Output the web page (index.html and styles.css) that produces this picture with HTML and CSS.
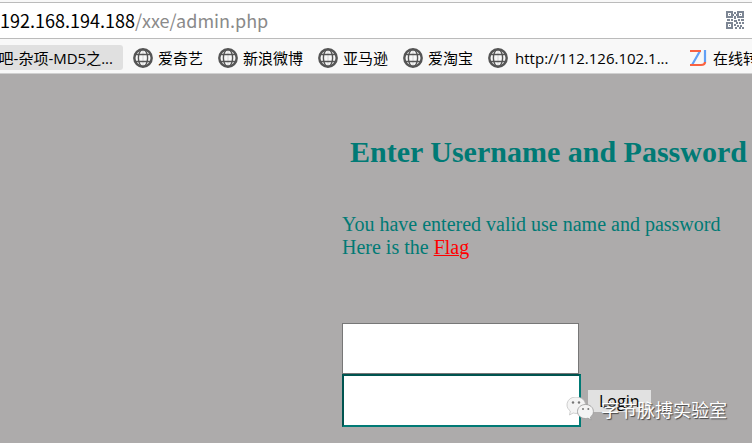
FILE: index.html
```html
<!DOCTYPE html>
<html lang="zh-CN">
<head>
<meta charset="utf-8">
<title>Login</title>
<link rel="stylesheet" href="styles.css">
</head>
<body>
<svg class="defs" aria-hidden="true">
  <symbol id="globe" viewBox="0 0 20 20">
    <g fill="none" stroke="#555">
      <circle cx="10" cy="10" r="8.7" stroke-width="2.4"/>
      <ellipse cx="10" cy="10" rx="4.6" ry="8.5" stroke-width="1.4"/>
      <path d="M2.8 6.500h14.4M2.8 13.500h14.4" stroke-width="1.3"/>
      <path d="M10 1.5v17" stroke-width=".5" opacity=".4"/>
    </g>
  </symbol>
</svg>
<header class="chrome">
  <div class="address">
    <div class="url"><span class="host">192.168.194.188</span>/xxe/admin.php</div>
    <button class="qr" type="button" aria-label="QR">
      <svg width="18" height="18" viewBox="0 0 18 18">
        <g fill="none" stroke="#7d8694" stroke-width="2">
          <path d="M1 1h5v5H1zM12 1h5v5h-5zM1 12h5v5H1z"/>
        </g>
        <path fill="#7d8694" d="M3 3h1v1H3zM14 3h1v1h-1zM3 14h1v1H3zM8 1h2v2H8zM8 5h2v3H8zM1 8h3v2H1zM5 8h2v2H5zM7 3h1v2H7zM10 3h1v2h-1zM8 9h3v2H8zM12 8h2v2h-2zM15 8h3v2h-3zM10 11h2v2h-2zM13 11h2v2h-2zM16 11h2v2h-2zM8 13h2v2H8zM11 14h2v2h-2zM14 14h2v2h-2zM9 16h2v2H9zM13 16h2v2h-2zM16 16h2v2h-2z"/>
      </svg>
    </button>
  </div>
  <nav class="bookmarks">
    <a class="mark current" href="#">吧-杂项-MD5之...</a>
    <a class="mark" href="#"><svg class="icon"><use href="#globe"/></svg>爱奇艺</a>
    <a class="mark" href="#"><svg class="icon"><use href="#globe"/></svg>新浪微博</a>
    <a class="mark" href="#"><svg class="icon"><use href="#globe"/></svg>亚马逊</a>
    <a class="mark" href="#"><svg class="icon"><use href="#globe"/></svg>爱淘宝</a>
    <a class="mark" href="#"><svg class="icon"><use href="#globe"/></svg><span class="latin">http://112.126.102.1...</span></a>
    <a class="mark" href="#"><svg class="icon" viewBox="0 0 20 20"><g fill="none" stroke-width="2.2"><path d="M12 3L4 17M17 2v13" stroke="#62a0f5"/><path d="M2 3h11M2 17h11q4 0 4-3" stroke="#fa6240"/></g></svg>在线转</a>
  </nav>
</header>
<main class="page">
  <h1 class="title">Enter Username and Password</h1>
  <p class="message">You have entered valid use name and password<br>Here is the <a class="flag" href="#">Flag</a></p>
  <form class="login">
    <input class="field" type="text" aria-label="Username">
    <div class="row">
      <input class="field active" type="password" aria-label="Password">
      <button class="submit" type="button">Login</button>
    </div>
  </form>
</main>
<div class="watermark">
  <svg width="28" height="24" viewBox="0 0 28 24">
    <path d="M10 0C4.500 0 1 3.500 1 8c0 2.500 1.300 4.500 3.300 6L3.500 18l3.700-2q1.400.4 2.800.4c5.500 0 9.500-3.500 9.500-8.200S15.500 0 10 0z" fill="#f4f4f4" stroke="#bbb" stroke-width=".7"/>
    <path d="M19.500 7.500c-4.500 0-8 3-8 7s3.500 7 8 7q1.300 0 2.500-.3l3.200 1.800-.8-3c1.900-1.300 3-3 3-5.500 0-4-3.400-7-7.900-7z" fill="#f4f4f4" stroke="#999" stroke-width=".8"/>
    <g fill="#777"><circle cx="7" cy="5.500" r="1.200"/><circle cx="13" cy="5.500" r="1.200"/><circle cx="17" cy="12" r="1"/><circle cx="22.300" cy="12" r="1"/></g>
  </svg>
  <span>字节脉搏实验室</span>
</div>
</body>
</html>
```
FILE: styles.css
```css
* {
  box-sizing: border-box;
}

body {
  margin: 0;
  min-height: 100vh;
  overflow: hidden;
  background: #adabab;
  font-family: "Open Sans", "Noto Sans CJK SC", sans-serif;
}

.defs {
  display: none;
}

.chrome {
  padding-top: 2px;
  background: #f8f8f8;
  border-bottom: 1px solid #d0d0d0;
}

.address {
  display: flex;
  align-items: center;
  justify-content: space-between;
  height: 37px;
  padding: 0 8px 2px 0;
  background: #fff;
  border-top: 1px solid #bbb;
  border-bottom: 1px solid #bbb;
}

.url {
  font-family: "Noto Sans CJK SC", sans-serif;
  font-size: 18px;
  line-height: 24px;
  color: #8a8a8a;
}

.host {
  color: #000;
}

.qr {
  display: flex;
  padding: 0;
  border: 0;
  background: none;
}

.bookmarks {
  display: flex;
  align-items: center;
  gap: 5px;
  height: 34px;
  padding-top: 3px;
  overflow: hidden;
}

.mark {
  display: flex;
  flex: none;
  align-items: center;
  gap: 5px;
  height: 25px;
  padding: 0 5px;
  font-family: "Noto Sans CJK SC", sans-serif;
  font-size: 15px;
  line-height: 24px;
  color: #000;
  white-space: nowrap;
  text-decoration: none;
}

.current {
  justify-content: flex-end;
  width: 123px;
  padding-right: 10px;
  background: #e0e0e0;
  border-radius: 0 3px 3px 0;
  font-family: "Open Sans", "Noto Sans CJK SC", sans-serif;
}

.latin {
  min-width: 160px;
  padding-left: 2px;
  font-family: "Open Sans", sans-serif;
}

.icon {
  width: 20px;
  height: 20px;
}

.page {
  padding: 60px 0 0 342px;
  font-family: "Liberation Serif", serif;
  color: #007a75;
}

.title {
  margin: 0 8px;
  font-size: 30px;
  line-height: 36px;
  white-space: nowrap;
}

.message {
  margin: 43px 0 64px;
  font-size: 20px;
  line-height: 23px;
  white-space: nowrap;
}

.flag {
  color: #f00;
  text-decoration-thickness: 1px;
}

.login {
  display: flex;
  flex-direction: column;
  align-items: flex-start;
}

.row {
  display: flex;
  align-items: center;
  gap: 7px;
}

.field {
  width: 237px;
  height: 51px;
  padding: 0 8px;
  border: 1px solid #777;
  background: #fff;
  font-size: 20px;
  outline: 0;
}

.active {
  width: 239px;
  height: 53px;
  border: 2px solid;
  border-color: #005450 #007a75 #007a75 #005450;
}

.submit {
  height: 22px;
  padding: 0 11px;
  border: 0;
  background: #e1e1e1;
  font-family: "Open Sans", sans-serif;
  font-size: 16px;
  line-height: 22px;
  color: #000;
}

.watermark {
  position: absolute;
  right: 25px;
  bottom: 21px;
  display: flex;
  align-items: center;
  gap: 7px;
  font-family: "Noto Sans CJK SC", sans-serif;
  font-size: 18px;
  line-height: 26px;
  color: #fff;
  text-shadow: 1px 1px 1px #444;
  pointer-events: none;
}
```
